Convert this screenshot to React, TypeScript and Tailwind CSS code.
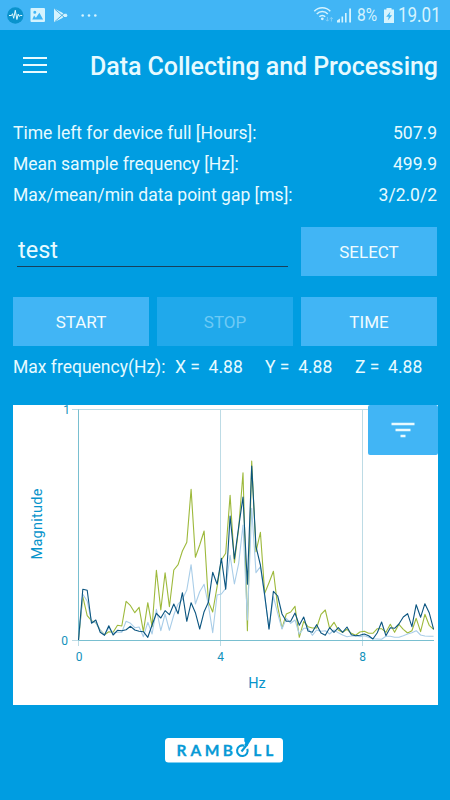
const GREEN = [
  720, 590, 647, 662, 668, 690, 704, 695, 697, 676, 678, 604, 617, 638, 622, 695, 608, 680, 511, 630, 518,
  620, 510, 494, 453, 427, 268, 472, 435, 393, 605, 636, 560, 480, 460, 286, 488, 385, 218, 692, 183, 455,
  397, 580, 548, 514, 620, 685, 642, 636, 619, 712, 664, 680, 684, 684, 643, 630, 685, 667, 690, 697, 688,
  700, 706, 696, 694, 700, 700, 686, 686, 697, 673, 697, 673, 688, 699, 692, 655, 695, 643, 676, 688,
];

const NAVY = [
  720, 568, 571, 670, 660, 697, 706, 677, 705, 691, 692, 689, 679, 690, 694, 695, 712, 675, 640, 654, 632,
  644, 612, 641, 578, 664, 608, 638, 687, 635, 607, 517, 553, 475, 568, 348, 477, 380, 291, 553, 198, 440,
  495, 585, 688, 574, 588, 642, 664, 664, 639, 676, 651, 693, 697, 674, 699, 706, 683, 697, 683, 697, 681,
  704, 707, 706, 702, 707, 717, 698, 666, 707, 683, 685, 672, 651, 641, 680, 614, 652, 611, 638, 688,
];

const PALE = [
  720, 583, 603, 665, 668, 690, 705, 683, 700, 696, 697, 664, 670, 683, 681, 710, 667, 702, 628, 692, 642,
  691, 645, 612, 598, 570, 494, 612, 575, 553, 615, 698, 585, 582, 565, 466, 552, 490, 375, 660, 325, 518,
  500, 590, 685, 590, 640, 687, 655, 670, 660, 702, 685, 685, 706, 690, 694, 692, 702, 690, 698, 705, 710,
  708, 707, 710, 707, 712, 716, 717, 718, 709, 709, 712, 712, 707, 702, 698, 692, 705, 708, 709, 709,
];

const SERIES = [
  { name: 'x', color: '#9db93b', values: GREEN },
  { name: 'z', color: '#a9cde8', values: PALE },
  { name: 'y', color: '#0b5580', values: NAVY },
];

const STATS = [
  { label: 'Time left for device full [Hours]:', value: '507.9' },
  { label: 'Mean sample frequency [Hz]:', value: '499.9' },
  { label: 'Max/mean/min data point gap [ms]:', value: '3/2.0/2' },
];

const LOGO_LETTERS = [
  { x: 16.5, char: 'R' },
  { x: 30.8, char: 'A' },
  { x: 47, char: 'M' },
  { x: 62.8, char: 'B' },
  { x: 92.2, char: 'L' },
  { x: 104.4, char: 'L' },
];

// samples are stored in thirds of a pixel, measured down from 5px above the chart
const toPoints = (values: number[]) =>
  values.map((v, i) => `${(65.5 + i * 4.33).toFixed(1)},${(v / 3 - 5).toFixed(1)}`).join(' ');

function StatusBar() {
  return (
    <div className="flex h-[30px] items-center bg-[#41b5f5] pl-[7px] pr-[12px] text-[#d5f3fe]">
      <svg width="95" height="30" viewBox="0 0 95 30">
        <circle cx="8.3" cy="15.5" r="8.2" fill="#0a93cd" />
        <path d="M2 15.5h2.5l1-1.8 1.2 4.6 1.6-8 1.6 9.2 1.3-5.4 1 2.2 1-.8h2" fill="none" stroke="#e4fbff" strokeWidth="1" />
        <path fillRule="evenodd" d="M24.500 8h12.500a1 1 0 0 1 1 1v12a1 1 0 0 1-1 1h-12.500a1 1 0 0 1-1-1V9a1 1 0 0 1 1-1zm.8 11.5h10.800l-3.700-6.700-3.500 5-1.800-2.300zM27.800 10.800a1.500 1.500 0 1 0 0 3 1.500 1.500 0 0 0 0-3z" fill="currentColor" />
        <path d="M47 8.600v13.600l8-4 1.500-1.200h3l1-1.600-1-1.600h-3l-1.500-1.200z" fill="currentColor" />
        <path d="M47.600 9l10 8.600M47.600 21.800l10-8.800" stroke="#41a9df" strokeWidth="0.900" />
        <g fill="currentColor">
          <circle cx="75.700" cy="15.500" r="1.300" />
          <circle cx="82" cy="15.500" r="1.300" />
          <circle cx="88.300" cy="15.500" r="1.300" />
        </g>
      </svg>
      <svg className="ml-auto" width="42" height="30" viewBox="0 0 42 30">
        <g fill="none" stroke="currentColor" strokeWidth="1.500">
          <path d="M2.300 11.300a10.800 10.800 0 0 1 16 0" />
          <path d="M4.800 14.100a7.200 7.200 0 0 1 11 0" />
          <path d="M7.400 16.700a3.900 3.900 0 0 1 5.800 0" />
        </g>
        <circle cx="10.300" cy="18.800" r="1.400" fill="currentColor" />
        <path d="M15.400 17v4m-1.500-1.400l1.500 1.600 1.500-1.600M19.400 21.500v-4m-1.500 1.400l1.500-1.600 1.500 1.600" fill="none" stroke="#82cff8" />
        <path d="M25 22.500v-2l3-2v4zM29.500 22.500v-6h1.600v6zM33 22.500V13h1.600v9.500zM37.200 22.500v-14h1.800v14z" fill="currentColor" />
      </svg>
      <span className="ml-[3px] w-[22px] origin-left scale-x-[0.84] whitespace-nowrap text-[18.500px] leading-[32px]">8%</span>
      <svg className="ml-[4px]" width="12" height="30" viewBox="0 0 12 30">
        <path d="M3.500 8h5v1.500H11V23H1V9.500h2.500z" fill="currentColor" />
        <path d="M7.500 11.500L3.200 16.700h2.600l-1 3.800 4.300-5.300H6.400z" fill="#41b5f5" />
      </svg>
      <span className="ml-[3px] w-[40px] origin-left scale-x-[0.85] whitespace-nowrap text-[20px] leading-[32px]">19.01</span>
    </div>
  );
}

function Chart() {
  return (
    <svg className="block overflow-visible" width="425" height="300" viewBox="0 0 425 300">
      <path d="M59 4.500H421M207.500 4.500V241M349.500 4.500V241M65.500 235V241M59 235.500H66" fill="none" stroke="#bddbe5" />
      <path d="M65.500 4.500V235.500H421" fill="none" stroke="#79bfd0" />
      {SERIES.map((s) => (
        <polyline key={s.name} points={toPoints(s.values)} fill="none" stroke={s.color} strokeWidth="1.1" strokeLinejoin="round" />
      ))}
      <g fill="#1291bb" fontSize="12" textAnchor="middle">
        <text x="53.500" y="8.500">1</text>
        <text x="51.500" y="239.500">0</text>
        <text x="66" y="255.500">0</text>
        <text x="207.500" y="255.500">4</text>
        <text x="349.500" y="255.500">8</text>
      </g>
      <g fill="#0794cb" fontSize="14.500" textAnchor="middle">
        <text x="244" y="283">Hz</text>
        <text transform="translate(28.500 119) rotate(-90)" textLength="71">Magnitude</text>
      </g>
    </svg>
  );
}

function Logo() {
  return (
    <svg className="ml-[165px] block" width="118" height="25" viewBox="0 0 118 25">
      <rect width="118" height="24.500" rx="3.500" fill="#fff" />
      <path d="M79.300 0v3.300l1 1.700-1 1.500 2.800 1.800L87.300 0z" fill="#009de1" />
      <g fill="#079ad6" fontFamily="Lato, sans-serif" fontWeight="700" fontSize="15.500" textAnchor="middle">
        {LOGO_LETTERS.map((l) => (
          <text key={l.x} x={l.x} y="18" stroke="#079ad6" strokeWidth="0.300">{l.char}</text>
        ))}
      </g>
      {/* slashed O, open at the upper right where the stroke passes through */}
      <path d="M79.300 7.800A5.300 5.300 0 1 0 82.300 10.800M76.500 13.500L82.500 6" fill="none" stroke="#079ad6" strokeWidth="2.100" />
    </svg>
  );
}

const buttonClass = 'flex h-[49px] items-center justify-center bg-[#41b5f5] pt-[2px] text-[17px] text-[#f0fcff]';

export default function App() {
  return (
    <div className="h-[800px] w-[450px] overflow-hidden bg-[#009de1] font-['Roboto',sans-serif] text-[#e6faff]">
      <StatusBar />

      <header className="flex h-[72px] items-center pl-[23px] pr-[12px]">
        <svg className="-mt-[2px]" width="24" height="18" viewBox="0 0 24 18">
          <path d="M0 2h24M0 9h24M0 16h24" stroke="#e9fbff" strokeWidth="2.200" />
        </svg>
        <h1 className="ml-auto whitespace-nowrap pt-[1px] text-[25px] font-medium tracking-[-0.050px]">Data Collecting and Processing</h1>
      </header>

      <main className="px-[13px]">
        <div className="pt-[15px]">
          {STATS.map((s) => (
            <div key={s.label} className="flex h-[31.300px] items-center justify-between whitespace-nowrap text-[17.500px]">
              <span>{s.label}</span>
              <span>{s.value}</span>
            </div>
          ))}
        </div>

        <div className="mt-[16px] flex justify-between">
          <div className="ml-[4px] h-[40px] w-[271px] border-b border-[#17405c] pl-[1px] text-[23.500px] leading-[46px]">test</div>
          <button className={`${buttonClass} w-[136px]`}>SELECT</button>
        </div>

        <div className="mt-[21px] grid grid-cols-3 gap-x-[8px]">
          <button className={buttonClass}>START</button>
          <button className="flex h-[49px] items-center justify-center bg-[#20a9eb] pt-[2px] text-[17px] text-[#6ecaf5]">STOP</button>
          <button className={buttonClass}>TIME</button>
        </div>

        <div className="flex h-[42px] items-center whitespace-pre text-[17.500px]">
          <span className="w-[162px]">Max frequency(Hz):</span>
          <span className="w-[90px]">X =  4.88</span>
          <span className="w-[90px]">Y =  4.88</span>
          <span>Z =  4.88</span>
        </div>

        <section className="relative mt-[17px] h-[300px] w-[425px] bg-white">
          <Chart />
          <button className="absolute right-0 top-0 flex h-[50px] w-[70px] items-center justify-center rounded-[2px] bg-[#41b5f5]">
            <svg width="24" height="16" viewBox="0 0 24 16">
              <path d="M.500 2h23M4.500 8h15M9.500 14h5" stroke="#e8faff" strokeWidth="2.500" />
            </svg>
          </button>
        </section>
      </main>

      <footer className="mt-[33px]">
        <Logo />
      </footer>
    </div>
  );
}
